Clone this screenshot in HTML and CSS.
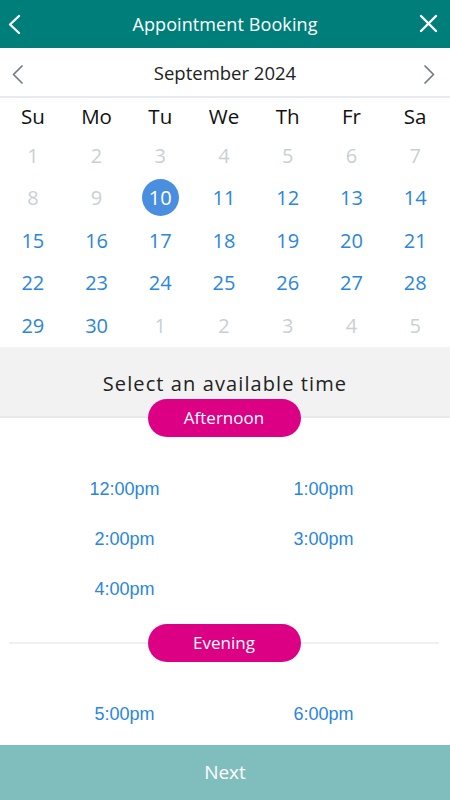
FILE: index.html
```html
<!DOCTYPE html>
<html>
<head>
<meta charset="utf-8">
<link rel="stylesheet" href="styles.css">
</head>
<body>
<div class="app">
  <header class="topbar">
    <div class="icon-box">
      <svg width="48" height="48" viewBox="0 0 48 48"><polyline points="19,16 10,24.5 19,33" fill="none" stroke="#fff" stroke-width="2.3" stroke-linecap="round" stroke-linejoin="round"/></svg>
    </div>
    <h1 class="title">Appointment Booking</h1>
    <div class="icon-box">
      <svg width="48" height="48" viewBox="0 0 48 48"><path d="M19 16 L34 31 M34 16 L19 31" fill="none" stroke="#fff" stroke-width="2.4" stroke-linecap="round"/></svg>
    </div>
  </header>

  <div class="monthbar">
    <div class="icon-box">
      <svg width="48" height="48" viewBox="0 0 48 48"><polyline points="22,18 13.5,26.5 22,35" fill="none" stroke="#6f7c88" stroke-width="1.7" stroke-linecap="round" stroke-linejoin="round"/></svg>
    </div>
    <div class="month">September 2024</div>
    <div class="icon-box">
      <svg width="48" height="48" viewBox="0 0 48 48"><polyline points="23,18 31.5,26.5 23,35" fill="none" stroke="#6f7c88" stroke-width="1.7" stroke-linecap="round" stroke-linejoin="round"/></svg>
    </div>
  </div>

  <div class="calendar">
    <div class="wd">Su</div><div class="wd">Mo</div><div class="wd">Tu</div><div class="wd">We</div><div class="wd">Th</div><div class="wd">Fr</div><div class="wd">Sa</div>

    <div class="day off">1</div><div class="day off">2</div><div class="day off">3</div><div class="day off">4</div><div class="day off">5</div><div class="day off">6</div><div class="day off">7</div>

    <div class="day off">8</div><div class="day off">9</div><div class="day"><span class="sel">10</span></div><div class="day">11</div><div class="day">12</div><div class="day">13</div><div class="day">14</div>

    <div class="day">15</div><div class="day">16</div><div class="day">17</div><div class="day">18</div><div class="day">19</div><div class="day">20</div><div class="day">21</div>

    <div class="day">22</div><div class="day">23</div><div class="day">24</div><div class="day">25</div><div class="day">26</div><div class="day">27</div><div class="day">28</div>

    <div class="day">29</div><div class="day">30</div><div class="day off">1</div><div class="day off">2</div><div class="day off">3</div><div class="day off">4</div><div class="day off">5</div>
  </div>

  <div class="times">
    <div class="times-head">Select an available time</div>
    <div class="pill pill-first">Afternoon</div>
    <div class="slots">
      <div class="slot">12:00pm</div>
      <div class="slot">1:00pm</div>
      <div class="slot">2:00pm</div>
      <div class="slot">3:00pm</div>
      <div class="slot">4:00pm</div>
    </div>
    <div class="divider">
      <div class="line"></div>
      <div class="pill">Evening</div>
      <div class="line"></div>
    </div>
    <div class="slots">
      <div class="slot">5:00pm</div>
      <div class="slot">6:00pm</div>
    </div>
  </div>

  <footer class="next">Next</footer>
</div>
</body>
</html>
```

FILE: styles.css
```css
* { box-sizing: border-box; }
html, body { margin: 0; padding: 0; }
body {
  width: 450px;
  height: 800px;
  overflow: hidden;
  font-family: "Open Sans", "Liberation Sans", sans-serif;
  background: #fff;
}
.app {
  display: flex;
  flex-direction: column;
  height: 800px;
}
.topbar {
  height: 48px;
  flex: none;
  background: #007f7a;
  display: flex;
  align-items: center;
  justify-content: space-between;
}
.icon-box {
  width: 48px;
  height: 48px;
  flex: none;
}
.icon-box svg { display: block; }
.title {
  margin: 0;
  color: #fff;
  font-size: 18px;
  font-weight: 500;
  line-height: 48px;
  letter-spacing: 0.1px;
}
.monthbar {
  height: 50px;
  flex: none;
  display: flex;
  align-items: flex-start;
  justify-content: space-between;
  border-bottom: 2px solid #e7ebef;
}
.month {
  font-size: 18.5px;
  line-height: 50px;
  color: #222;
}
.calendar {
  flex: none;
  display: grid;
  grid-template-columns: repeat(7, 1fr);
  grid-template-rows: 36px repeat(5, 42.5px);
  margin: 0 3px 0 1px;
}
.wd, .day {
  display: flex;
  align-items: center;
  justify-content: center;
  font-size: 20px;
}
.wd { color: #111; font-size: 20.5px; }
.day { color: #2a86de; }
.day.off { color: #c8d0d5; }
.sel {
  width: 37px;
  height: 37px;
  border-radius: 50%;
  background: #4a8fdf;
  color: #fff;
  display: flex;
  align-items: center;
  justify-content: center;
}
.times {
  flex: 1;
  overflow: hidden;
}
.times-head {
  background: #f2f2f2;
  border-bottom: 2px solid #e6eaed;
  height: 71px;
  padding-top: 24px;
  text-align: center;
  font-size: 20px;
  line-height: 26px;
  letter-spacing: 1.1px;
  color: #222;
}
.pill {
  width: 153px;
  height: 38px;
  border-radius: 19px;
  background: #dc0084;
  color: #fff;
  font-size: 17px;
  line-height: 38px;
  text-align: center;
  flex: none;
}
.pill-first {
  margin: -19px auto 0;
  position: relative;
  left: -1px;
}
.slots {
  display: grid;
  grid-template-columns: 1fr 1fr;
  grid-auto-rows: 50px;
  margin: 28px 27px 0 25px;
}
.slot {
  display: flex;
  align-items: center;
  justify-content: center;
  font-family: "Liberation Sans", Arial, sans-serif;
  font-size: 18px;
  color: #2a86de;
}
.divider {
  display: flex;
  align-items: center;
  margin: 9px 11px 0 9px;
}
.line {
  flex: 1;
  height: 2px;
  background: #eef1f4;
}
.next {
  height: 55px;
  flex: none;
  background: #80bdbd;
  color: #fff;
  font-size: 19px;
  text-align: center;
  line-height: 55px;
}
```
